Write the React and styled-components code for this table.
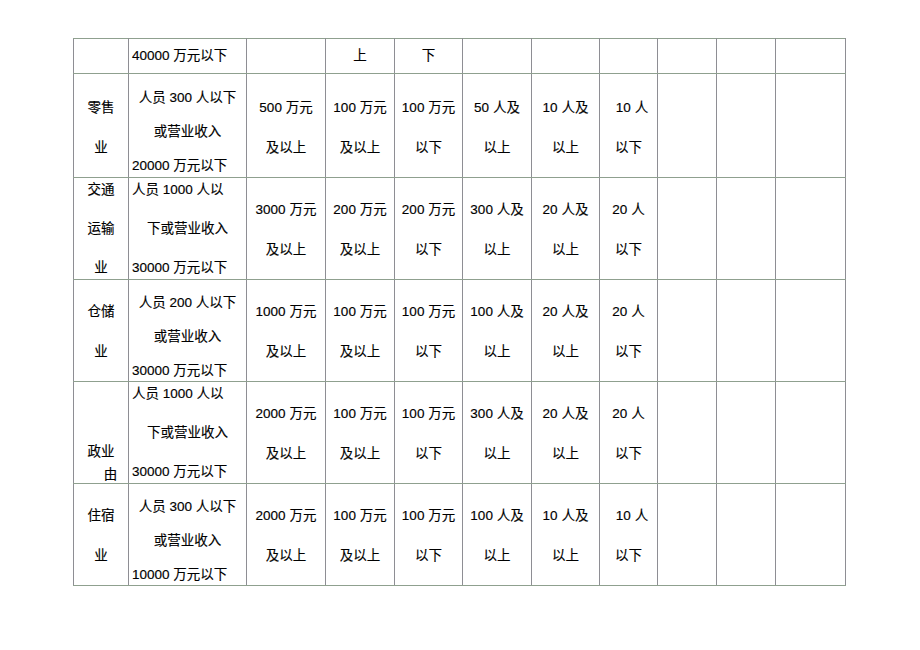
import React from 'react'
import styled, { createGlobalStyle } from 'styled-components'

const GlobalStyle = createGlobalStyle`
  html, body {
    margin: 0;
    padding: 0;
    background: #fff;
  }
  body {
    font-family: "Liberation Sans", "Noto Sans CJK SC", sans-serif;
    font-size: 13.5px;
    color: #000;
  }
`

const Page = styled.div`
  width: 920px;
  height: 650px;
  padding: 38px 0 0 73px;
  box-sizing: border-box;
`

const Table = styled.table`
  border-collapse: collapse;
  table-layout: fixed;
  width: 772px;
  border: 1px dotted #aab6aa;
`

const Row = styled.tr`
  height: ${p => p.$height}px;
`

const Cell = styled.td`
  padding: ${p => p.$shift || 0}px 3px 0 3px;
  vertical-align: ${p => p.$valign || 'middle'};
  border-top: 1px solid #8fa08f;
  border-bottom: 1px solid #8fa08f;
  border-left: 1px solid ${p => (p.$light ? '#b4bab4' : '#8e8e94')};
  border-right: 1px solid #8e8e94;
  overflow: visible;
  white-space: nowrap;
`

const Stack = styled.div`
  display: flex;
  flex-direction: column;
  gap: ${p => p.$gap}px;
  margin-bottom: ${p => p.$pull || 0}px;
`

const Line = styled.div`
  height: 20px;
  line-height: 20px;
  text-align: ${p => p.$align || 'center'};
  padding-left: ${p => p.$nudge || 0}px;
  -webkit-text-stroke: 0.15px #000;
`

const widths = [55, 118, 79, 69, 68, 69, 68, 58, 59, 59, 70]

const L = (text, align, nudge) => ({ text, align, nudge })

const rows = [
  {
    height: 35,
    cells: [
      null,
      { lines: [L('40000 万元以下', 'left')], gap: 0 },
      null,
      { lines: [L('上')], gap: 0 },
      { lines: [L('下')], gap: 0 },
    ],
  },
  {
    height: 104,
    cells: [
      { lines: [L('零售'), L('业')], gap: 20, shift: 4 },
      { lines: [L('人员 300 人以下'), L('或营业收入'), L('20000 万元以下', 'left')], gap: 14, shift: 12 },
      { lines: [L('500 万元'), L('及以上')], gap: 20, shift: 4 },
      { lines: [L('100 万元'), L('及以上')], gap: 20, shift: 4 },
      { lines: [L('100 万元'), L('以下')], gap: 20, shift: 4 },
      { lines: [L('50 人及'), L('以上')], gap: 20, shift: 4 },
      { lines: [L('10 人及'), L('以上')], gap: 20, shift: 4 },
      { lines: [L('10 人', 'center', 7), L('以下')], gap: 20, shift: 4 },
    ],
  },
  {
    height: 102,
    cells: [
      { lines: [L('交通'), L('运输'), L('业')], gap: 19, shift: 1 },
      { lines: [L('人员 1000 人以', 'left'), L('下或营业收入'), L('30000 万元以下', 'left')], gap: 19, shift: 1 },
      { lines: [L('3000 万元'), L('及以上')], gap: 20, shift: 3 },
      { lines: [L('200 万元'), L('及以上')], gap: 20, shift: 3 },
      { lines: [L('200 万元'), L('以下')], gap: 20, shift: 3 },
      { lines: [L('300 人及'), L('以上')], gap: 20, shift: 3 },
      { lines: [L('20 人及'), L('以上')], gap: 20, shift: 3 },
      { lines: [L('20 人'), L('以下')], gap: 20, shift: 3 },
    ],
  },
  {
    height: 102,
    cells: [
      { lines: [L('仓储'), L('业')], gap: 20, shift: 3 },
      { lines: [L('人员 200 人以下'), L('或营业收入'), L('30000 万元以下', 'left')], gap: 14, shift: 12 },
      { lines: [L('1000 万元'), L('及以上')], gap: 20, shift: 3 },
      { lines: [L('100 万元'), L('及以上')], gap: 20, shift: 3 },
      { lines: [L('100 万元'), L('以下')], gap: 20, shift: 3 },
      { lines: [L('100 人及'), L('以上')], gap: 20, shift: 3 },
      { lines: [L('20 人及'), L('以上')], gap: 20, shift: 3 },
      { lines: [L('20 人'), L('以下')], gap: 20, shift: 3 },
    ],
  },
  {
    height: 102,
    cells: [
      { lines: [L('政业'), L('由', 'center', 19)], gap: 3, valign: 'bottom', pull: -2 },
      { lines: [L('人员 1000 人以', 'left'), L('下或营业收入'), L('30000 万元以下', 'left')], gap: 19, shift: 1 },
      { lines: [L('2000 万元'), L('及以上')], gap: 20, shift: 3 },
      { lines: [L('100 万元'), L('及以上')], gap: 20, shift: 3 },
      { lines: [L('100 万元'), L('以下')], gap: 20, shift: 3 },
      { lines: [L('300 人及'), L('以上')], gap: 20, shift: 3 },
      { lines: [L('20 人及'), L('以上')], gap: 20, shift: 3 },
      { lines: [L('20 人'), L('以下')], gap: 20, shift: 3 },
    ],
  },
  {
    height: 102,
    cells: [
      { lines: [L('住宿'), L('业')], gap: 20, shift: 3 },
      { lines: [L('人员 300 人以下'), L('或营业收入'), L('10000 万元以下', 'left')], gap: 14, shift: 12 },
      { lines: [L('2000 万元'), L('及以上')], gap: 20, shift: 3 },
      { lines: [L('100 万元'), L('及以上')], gap: 20, shift: 3 },
      { lines: [L('100 万元'), L('以下')], gap: 20, shift: 3 },
      { lines: [L('100 人及'), L('以上')], gap: 20, shift: 3 },
      { lines: [L('10 人及'), L('以上')], gap: 20, shift: 3 },
      { lines: [L('10 人', 'center', 7), L('以下')], gap: 20, shift: 3 },
    ],
  },
]

const TableCell = ({ cell, col }) => (
  <Cell
    $shift={cell ? cell.shift : 0}
    $valign={cell ? cell.valign : undefined}
    $light={col === 2}
  >
    {cell && (
      <Stack $gap={cell.gap} $pull={cell.pull}>
        {cell.lines.map((line, i) => (
          <Line key={i} $align={line.align} $nudge={line.nudge}>
            {line.text}
          </Line>
        ))}
      </Stack>
    )}
  </Cell>
)

export default function App() {
  return (
    <Page>
      <GlobalStyle />
      <Table>
        <colgroup>
          {widths.map((w, i) => <col key={i} style={{ width: w }} />)}
        </colgroup>
        <tbody>
          {rows.map((row, r) => (
            <Row key={r} $height={row.height}>
              {widths.map((_, c) => (
                <TableCell key={c} col={c} cell={row.cells[c]} />
              ))}
            </Row>
          ))}
        </tbody>
      </Table>
    </Page>
  )
}
